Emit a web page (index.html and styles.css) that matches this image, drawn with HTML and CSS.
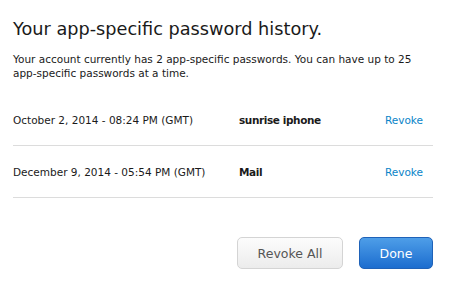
FILE: index.html
```html
<!DOCTYPE html>
<html lang="en">

<head>
    <meta charset="UTF-8">
    <meta name="viewport" content="width=device-width, initial-scale=1.0">
    <title>App-specific password history</title>
    <link rel="stylesheet" href="styles.css">
</head>

<body>
    <div class="sheet">
        <h2>Your app-specific password history.</h2>
        <p class="intro">Your account currently has 2 app-specific passwords. You can have up to 25 app-specific passwords at a time.</p>

        <!-- Список паролей -->
        <div class="history">
            <div class="row">
                <span class="date">October 2, 2014 - 08:24 PM (GMT)</span>
                <span class="label">sunrise iphone</span>
                <a href="#" class="revoke">Revoke</a>
            </div>
            <div class="row">
                <span class="date">December 9, 2014 - 05:54 PM (GMT)</span>
                <span class="label">Mail</span>
                <a href="#" class="revoke">Revoke</a>
            </div>
        </div>

        <div class="actions">
            <button class="btn btn-light">Revoke All</button>
            <button class="btn btn-blue">Done</button>
        </div>
    </div>
</body>

</html>
```

FILE: styles.css
```css
body {
    font-family: "DejaVu Sans", sans-serif;
    margin: 0;
    padding: 0;
    background-color: white;
    color: #1a1a1a;
}

.sheet {
    width: 420px;
    padding: 0 0 0 13px;
}

h2 {
    font-size: 17.7px;
    font-weight: normal;
    margin: 0;
    padding-top: 17px;
    line-height: 24px;
    color: #1a1a1a;
}

.intro {
    font-size: 10.5px;
    line-height: 14px;
    margin: 11px 0 0 0;
}

.history {
    margin-top: 14px;
}

.row {
    display: flex;
    align-items: center;
    height: 51px;
    border-bottom: 1px solid #dcdcdc;
    font-size: 10.5px;
}

.date {
    width: 226px;
}

.label {
    flex: 1;
    font-weight: bold;
    letter-spacing: -0.4px;
}

.revoke {
    color: #0a84c8;
    text-decoration: none;
    margin-right: 10px;
}

.actions {
    display: flex;
    justify-content: flex-end;
    gap: 16px;
    margin-top: 39px;
}

.btn {
    font-family: "DejaVu Sans", sans-serif;
    font-size: 12.5px;
    height: 32px;
    border-radius: 5px;
    cursor: pointer;
}

.btn-light {
    width: 106px;
    color: #555;
    border: 1px solid #d4d4d4;
    background: linear-gradient(#fcfcfc, #ececec);
}

.btn-blue {
    width: 74px;
    color: white;
    border: 1px solid #1f62b8;
    background: linear-gradient(#4e9ee8, #1c6dcf);
}
```
